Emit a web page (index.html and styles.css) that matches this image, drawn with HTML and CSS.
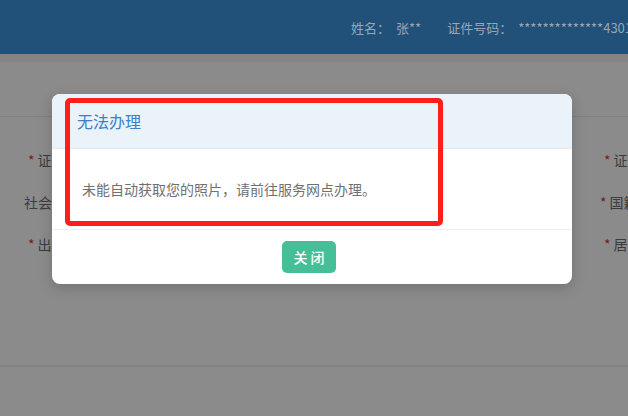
FILE: index.html
```html
<!DOCTYPE html>
<html lang="zh-CN">
<head>
  <meta charset="UTF-8">
  <meta name="viewport" content="width=device-width, initial-scale=1.0">
  <title>无法办理</title>
  <link rel="stylesheet" href="styles.css">
</head>
<body>
  <div class="topbar">
    <span class="user">姓名：<b>张**</b></span>
    <span class="user">证件号码：<b>**************4301</b></span>
  </div>
  <div class="strip"></div>

  <div class="toolbar"></div>

  <div class="form">
    <div class="row">
      <div class="field"><label><i>*</i>证件类型：</label></div>
      <div class="field right"><label><i>*</i>证件有效期：</label></div>
    </div>
    <div class="row">
      <div class="field"><label class="plain">社会保障号码：</label></div>
      <div class="field right"><label class="plain"><i>*</i>国籍地区：</label></div>
    </div>
    <div class="row">
      <div class="field"><label><i>*</i>出生日期：</label></div>
      <div class="field right"><label><i>*</i>居住地址：</label></div>
    </div>
  </div>

  <!-- dialog -->
  <div class="modal">
    <div class="modal-head">无法办理</div>
    <div class="modal-body">未能自动获取您的照片，请前往服务网点办理。</div>
    <div class="modal-foot">
      <button class="btn">关闭</button>
    </div>
    <div class="mark"></div>
  </div>
</body>
</html>
```

FILE: styles.css
```css
html, body {
  margin: 0;
  padding: 0;
  height: 100%;
  overflow: hidden;
}
body {
  background: #8b8b8b;
  font-family: "Noto Sans CJK SC", "Noto Sans", sans-serif;
  font-size: 14px;
  color: #3c3c3c;
}

.topbar {
  height: 54px;
  background: #215079;
  display: flex;
  align-items: center;
  padding-left: 351px;
  gap: 26px;
  white-space: nowrap;
  overflow: hidden;
}
.user {
  color: #9ba6b2;
  font-size: 13px;
}
.user b {
  font-weight: normal;
  margin-left: 6px;
}

.strip {
  height: 8px;
  background: #848484;
}
.toolbar {
  height: 54px;
  border-bottom: 1px solid #808080;
}

.form {
  padding-top: 33px;
  height: 215px;
  border-bottom: 2px solid #818181;
}
.row {
  display: flex;
  height: 42px;
  overflow: hidden;
}
.field {
  width: 576px;
  flex-shrink: 0;
}
.field label {
  display: block;
  margin-left: 28px;
  white-space: nowrap;
  line-height: 20px;
}
.field label.plain {
  margin-left: 24px;
}
.field i {
  font-style: normal;
  color: #7d1a1f;
  margin-right: 3px;
}

.modal {
  position: absolute;
  top: 94px;
  left: 52px;
  width: 520px;
  background: #fff;
  border-radius: 8px;
  overflow: hidden;
  box-shadow: 0 4px 14px rgba(0, 0, 0, .18);
}
.modal-head {
  height: 54px;
  line-height: 54px;
  padding-left: 25px;
  background: #eaf2fa;
  border-bottom: 1px solid #e3e9ef;
  color: #3c80c8;
  font-size: 16px;
}
.modal-body {
  height: 80px;
  padding-left: 30px;
  line-height: 80px;
  font-size: 14px;
  color: #707070;
  border-bottom: 1px solid #eeeeee;
}
.modal-foot {
  display: flex;
  justify-content: center;
  padding: 11px 6px 11px 0;
}
.btn {
  width: 54px;
  height: 32px;
  border: none;
  border-radius: 5px;
  background: #46bf98;
  color: #fff;
  font-family: inherit;
  font-size: 14px;
  font-weight: 500;
  letter-spacing: 3px;
  padding: 0 0 0 3px;
}

/* annotation box */
.mark {
  position: absolute;
  left: 13px;
  top: 4px;
  width: 368px;
  height: 118px;
  border: 5px solid #ff1e1a;
  border-radius: 5px;
}
```
